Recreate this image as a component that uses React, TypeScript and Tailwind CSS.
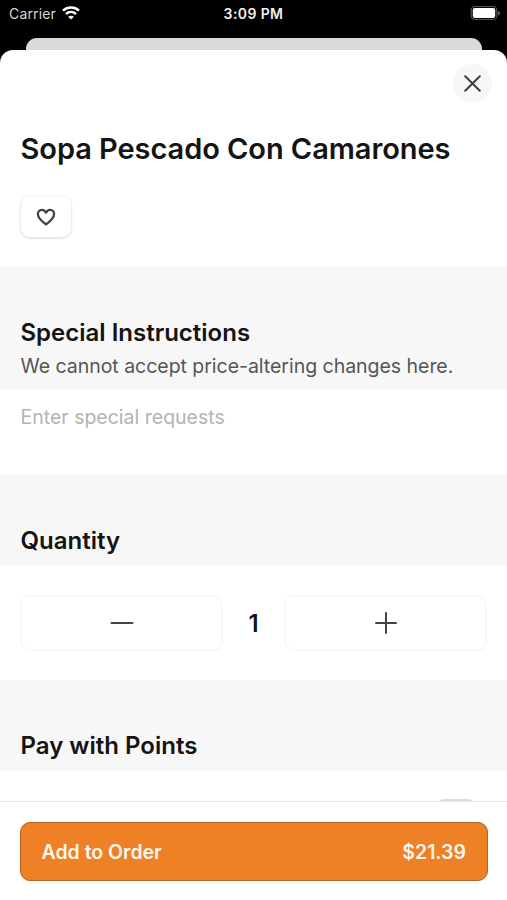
import type { ReactNode } from "react";

function StatusBar() {
  return (
    <header className="relative flex h-[38px] shrink-0 items-start justify-between pl-[9px] pr-[6px] text-white">
      <div className="flex h-7 items-center gap-[6px]">
        <span className="text-[14px] leading-7 tracking-[0.15px] text-[#d6d6d6]">Carrier</span>
        <svg width="18" height="14" viewBox="0 0 18 14" fill="none" className="mb-[2px]" aria-hidden="true">
          <path d="M1 4.7C5.4.5 12.6.5 17 4.7" stroke="white" strokeWidth="2.5" />
          <path d="M4 8c2.9-2.7 7.1-2.7 10 0" stroke="white" strokeWidth="2.4" />
          <path d="M9 13.6 6.1 10.7C7.7 9.3 10.3 9.3 11.9 10.7Z" fill="white" />
        </svg>
      </div>
      <span className="absolute left-1/2 top-0 -translate-x-1/2 whitespace-nowrap text-[14px] font-semibold leading-7 tracking-[0.4px] text-[#f0f0f0]">
        3:09 PM
      </span>
      <svg width="31" height="16" viewBox="0 0 31 16" className="mt-[5px]" aria-hidden="true">
        <rect x="1.2" y="1.5" width="25.6" height="13" rx="3.6" fill="none" stroke="#555" strokeWidth="1.2" />
        <rect x="2.8" y="3" width="22.4" height="10" rx="2" fill="white" />
        <path d="M28 6v4.5c1.3-.4 2-1.300 2-2.250S29.300 6.400 28 6Z" fill="#666" />
      </svg>
    </header>
  );
}

function SectionHeading({ children }: { children: ReactNode }) {
  return <h2 className="text-[24px] font-semibold leading-8 text-[#141414]">{children}</h2>;
}

function StepButton({ label, children }: { label: string; children: ReactNode }) {
  return (
    <button
      aria-label={label}
      className="flex h-14 w-[203px] items-center justify-center rounded-[10px] border-2 border-[#f7f7f7] bg-white"
    >
      {children}
    </button>
  );
}

export default function App() {
  return (
    <div className="flex h-[900px] w-[507px] flex-col overflow-hidden bg-black font-['Inter',sans-serif]">
      <StatusBar />
      <div className="ml-[26px] mr-[25px] h-3 shrink-0 rounded-t-[11px] bg-[#dadada]" />
      <main className="flex min-h-0 flex-1 flex-col rounded-t-[13px] bg-white">
        <section className="flex h-[217px] shrink-0 flex-col">
          <div className="flex justify-end pr-[15px] pt-[14px]">
            <button aria-label="Close" className="flex size-[39px] items-center justify-center rounded-full bg-[#f7f7f7]">
              <svg width="17" height="17" viewBox="0 0 17 17" aria-hidden="true">
                <path d="m1.200 1.200 14.600 14.600M15.800 1.200 1.200 15.800" stroke="#404040" strokeWidth="2" strokeLinecap="round" />
              </svg>
            </button>
          </div>
          <h1 className="mt-[28px] whitespace-nowrap pl-[20.5px] text-[29px] font-semibold leading-9 tracking-[-0.06px] text-[#141414]">
            Sopa Pescado Con Camarones
          </h1>
          <button
            aria-label="Favorite"
            className="ml-[21px] mt-[29px] flex h-[41px] w-[50px] items-center justify-center rounded-[9px] bg-white shadow-[0_1px_2px_1px_rgba(0,0,0,0.1)]"
          >
            <svg width="20" height="18" viewBox="0 0 20 18" fill="none" aria-hidden="true">
              <path
                d="M10 16.400C8 15 1.900 10.900 1.900 6.100 1.900 3.500 3.700 1.800 5.900 1.800c1.800 0 3.300 1.100 4.100 2.900.8-1.800 2.300-2.900 4.100-2.900 2.200 0 4 1.700 4 4.300 0 4.800-6.100 8.900-8.100 10.300Z"
                stroke="#404040"
                strokeWidth="2.2"
                strokeLinejoin="round"
              />
            </svg>
          </button>
        </section>
        <section className="h-[123px] shrink-0 bg-[#f7f7f7] pl-[20.5px] pt-[50px]">
          <SectionHeading>Special Instructions</SectionHeading>
          <p className="mt-[3px] whitespace-nowrap text-[19.5px] leading-7 tracking-[-0.03px] text-[#555]">
            We cannot accept price-altering changes here.
          </p>
        </section>
        <div className="h-[85px] shrink-0 pl-[20.5px] pt-[13px] text-[19.5px] leading-7 text-[#b3b3b3]">
          Enter special requests
        </div>
        <section className="h-[91px] shrink-0 bg-[#f7f7f7] pl-[20.5px] pt-[50px]">
          <SectionHeading>Quantity</SectionHeading>
        </section>
        <div className="flex h-[114px] shrink-0 items-center justify-between pl-5 pr-[20px]">
          <StepButton label="Decrease quantity">
            <svg width="24" height="24" viewBox="0 0 24 24" aria-hidden="true">
              <path d="M1.500 12h21" stroke="#444" strokeWidth="2" strokeLinecap="round" />
            </svg>
          </StepButton>
          <span className="pt-px text-[24px] font-semibold leading-8 text-[#141414]">1</span>
          <StepButton label="Increase quantity">
            <svg width="24" height="24" viewBox="0 0 24 24" aria-hidden="true">
              <path d="M2 12h20M12 2v20" stroke="#444" strokeWidth="2" strokeLinecap="round" />
            </svg>
          </StepButton>
        </div>
        <section className="h-[91px] shrink-0 bg-[#f7f7f7] pl-[20.5px] pt-[50px]">
          <SectionHeading>Pay with Points</SectionHeading>
        </section>
        <div className="flex h-[30px] shrink-0 items-start justify-end overflow-hidden pr-[31px] pt-7">
          <div className="h-[25px] w-[40px] shrink-0 rounded-[8px] bg-[#dedede]" />
        </div>
        <footer className="flex-1 border-t border-[#e9e9e9] bg-white pl-5 pr-[19px] pt-[20px]">
          <button className="flex h-[59px] w-full items-center justify-between rounded-[10px] border border-[#b3621f] bg-[#ee8026] pl-[20.5px] pr-[21px] pt-[2px] text-[19.5px] font-semibold text-[#fff8ef]">
            <span>Add to Order</span>
            <span>$21.39</span>
          </button>
        </footer>
      </main>
    </div>
  );
}
